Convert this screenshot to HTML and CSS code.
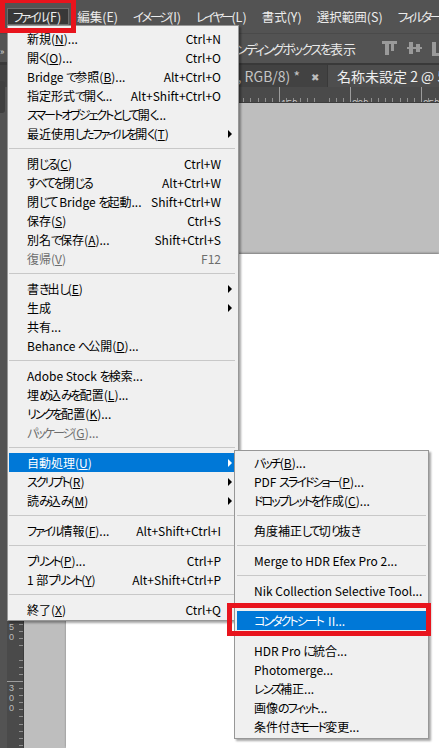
FILE: index.html
```html
<!DOCTYPE html>
<html lang="ja">
<head>
<meta charset="utf-8">
<title>Photoshop ファイルメニュー</title>
<link rel="stylesheet" href="styles.css">
</head>
<body>
<div class="app">
  <div class="menubar">
    <span class="mb-item active"><span class="k">ファイル</span>(F)</span>
    <span class="mb-item">編集(E)</span>
    <span class="mb-item"><span class="k">イメージ</span>(I)</span>
    <span class="mb-item"><span class="k">レイヤー</span>(L)</span>
    <span class="mb-item">書式(Y)</span>
    <span class="mb-item">選択範囲(S)</span>
    <span class="mb-item"><span class="k">フィルター</span>(T)</span>
  </div>
  <div class="optbar">
    <div class="opt-left"><span class="opt-check"></span><span class="opt-text"><span class="k">バウンディングボックスを</span>表示</span></div>
    <span class="opt-sep"></span>
    <svg class="opt-icon" width="15" height="15" viewBox="0 0 15 15"><rect x="0" y="0" width="15" height="3" fill="#9a9a9a"/><rect x="3" y="3" width="4" height="11" fill="#9a9a9a"/><rect x="9" y="3" width="3" height="7" fill="#9a9a9a"/></svg>
    <svg class="opt-icon" width="15" height="15" viewBox="0 0 15 15"><rect x="0" y="6" width="15" height="2" fill="#9a9a9a"/><rect x="2" y="1" width="4" height="12" fill="#9a9a9a"/><rect x="9" y="3" width="4" height="8" fill="#9a9a9a"/></svg>
    <svg class="opt-icon" width="15" height="15" viewBox="0 0 15 15"><rect x="0" y="12" width="15" height="3" fill="#9a9a9a"/><rect x="0" y="1" width="4" height="11" fill="#9a9a9a"/><rect x="7" y="5" width="3" height="7" fill="#9a9a9a"/></svg>
  </div>
  <div class="tabs">
    <div class="tab inactive"><span class="tab-text">名称未設定 1 @ 66.7% (<span class="k">レイヤー</span> 3, RGB/8) *</span><span class="tab-x">✖</span></div>
    <div class="tab active"><span class="tab-text">名称未設定 2 @ 50% (RGB/8) *</span></div>
  </div>
  <div class="work">
    <div class="toolstrip">
      <span class="ts-arrow">»</span>
      <span class="ts-line"></span>
      <span class="ts-btn"></span>
    </div>
    <div class="vruler">
      <div class="vseg"><span class="vlab">-<br>1<br>0<br>0</span></div>
      <div class="vseg"><span class="vlab">-<br>5<br>0</span></div>
      <div class="vseg"><span class="vlab">0</span></div>
      <div class="vseg"><span class="vlab">5<br>0</span></div>
      <div class="vseg"><span class="vlab">1<br>0<br>0</span></div>
      <div class="vseg"><span class="vlab">1<br>5<br>0</span></div>
      <div class="vseg"><span class="vlab">2<br>0<br>0</span></div>
      <div class="vseg"><span class="vlab">2<br>5<br>0</span></div>
      <div class="vseg"><span class="vlab">3<br>0<br>0</span></div>
    </div>
    <div class="docwrap">
      <div class="hruler">
        <div class="hseg"><span class="hlab">0</span></div>
        <div class="hseg"><span class="hlab">50</span></div>
        <div class="hseg"><span class="hlab">100</span></div>
        <div class="hseg"><span class="hlab">150</span></div>
        <div class="hseg"><span class="hlab">200</span></div>
        <div class="hseg"><span class="hlab">250</span></div>
      </div>
      <div class="pasteboard"><div class="doc"></div></div>
    </div>
  </div>
</div>

<div class="menu file-menu">
  <div class="mi"><span class="lb">新規(<u>N</u>)...</span><span class="sc">Ctrl+N</span><span class="ar"></span></div>
  <div class="mi"><span class="lb">開<span class="k">く</span>(<u>O</u>)...</span><span class="sc">Ctrl+O</span><span class="ar"></span></div>
  <div class="mi"><span class="lb">Bridge <span class="k">で</span>参照(<u>B</u>)...</span><span class="sc">Alt+Ctrl+O</span><span class="ar"></span></div>
  <div class="mi"><span class="lb">指定形式<span class="k">で</span>開<span class="k">く</span>...</span><span class="sc">Alt+Shift+Ctrl+O</span><span class="ar"></span></div>
  <div class="mi"><span class="lb"><span class="k">スマートオブジェクトとして</span>開<span class="k">く</span>...</span><span class="sc"></span><span class="ar"></span></div>
  <div class="mi"><span class="lb">最近使用<span class="k">したファイルを</span>開<span class="k">く</span>(<u>T</u>)</span><span class="sc"></span><span class="ar on"></span></div>
  <div class="sep"></div>
  <div class="mi"><span class="lb">閉<span class="k">じる</span>(<u>C</u>)</span><span class="sc">Ctrl+W</span><span class="ar"></span></div>
  <div class="mi"><span class="lb"><span class="k">すべてを</span>閉<span class="k">じる</span></span><span class="sc">Alt+Ctrl+W</span><span class="ar"></span></div>
  <div class="mi"><span class="lb">閉<span class="k">じて</span> Bridge <span class="k">を</span>起動...</span><span class="sc">Shift+Ctrl+W</span><span class="ar"></span></div>
  <div class="mi"><span class="lb">保存(<u>S</u>)</span><span class="sc">Ctrl+S</span><span class="ar"></span></div>
  <div class="mi"><span class="lb">別名<span class="k">で</span>保存(<u>A</u>)...</span><span class="sc">Shift+Ctrl+S</span><span class="ar"></span></div>
  <div class="mi dis"><span class="lb">復帰(<u>V</u>)</span><span class="sc">F12</span><span class="ar"></span></div>
  <div class="sep"></div>
  <div class="mi"><span class="lb">書<span class="k">き</span>出<span class="k">し</span>(<u>E</u>)</span><span class="sc"></span><span class="ar on"></span></div>
  <div class="mi"><span class="lb">生成</span><span class="sc"></span><span class="ar on"></span></div>
  <div class="mi"><span class="lb">共有...</span><span class="sc"></span><span class="ar"></span></div>
  <div class="mi"><span class="lb">Behance <span class="k">へ</span>公開(<u>D</u>)...</span><span class="sc"></span><span class="ar"></span></div>
  <div class="sep"></div>
  <div class="mi"><span class="lb">Adobe Stock <span class="k">を</span>検索...</span><span class="sc"></span><span class="ar"></span></div>
  <div class="mi"><span class="lb">埋<span class="k">め</span>込<span class="k">みを</span>配置(<u>L</u>)...</span><span class="sc"></span><span class="ar"></span></div>
  <div class="mi"><span class="lb"><span class="k">リンクを</span>配置(<u>K</u>)...</span><span class="sc"></span><span class="ar"></span></div>
  <div class="mi dis"><span class="lb"><span class="k">パッケージ</span>(<u>G</u>)...</span><span class="sc"></span><span class="ar"></span></div>
  <div class="sep"></div>
  <div class="mi hl"><span class="lb">自動処理(<u>U</u>)</span><span class="sc"></span><span class="ar on"></span></div>
  <div class="mi"><span class="lb"><span class="k">スクリプト</span>(<u>R</u>)</span><span class="sc"></span><span class="ar on"></span></div>
  <div class="mi"><span class="lb">読<span class="k">み</span>込<span class="k">み</span>(<u>M</u>)</span><span class="sc"></span><span class="ar on"></span></div>
  <div class="sep"></div>
  <div class="mi"><span class="lb"><span class="k">ファイル</span>情報(<u>F</u>)...</span><span class="sc">Alt+Shift+Ctrl+I</span><span class="ar"></span></div>
  <div class="sep"></div>
  <div class="mi"><span class="lb"><span class="k">プリント</span>(<u>P</u>)...</span><span class="sc">Ctrl+P</span><span class="ar"></span></div>
  <div class="mi"><span class="lb">1 部<span class="k">プリント</span>(<u>Y</u>)</span><span class="sc">Alt+Shift+Ctrl+P</span><span class="ar"></span></div>
  <div class="sep"></div>
  <div class="mi"><span class="lb">終了(<u>X</u>)</span><span class="sc">Ctrl+Q</span><span class="ar"></span></div>
</div>

<div class="menu sub-menu">
  <div class="mi"><span class="lb"><span class="k">バッチ</span>(<u>B</u>)...</span></div>
  <div class="mi"><span class="lb">PDF <span class="k">スライドショー</span>(<u>P</u>)...</span></div>
  <div class="mi"><span class="lb"><span class="k">ドロップレットを</span>作成(<u>C</u>)...</span></div>
  <div class="sep"></div>
  <div class="mi"><span class="lb">角度補正<span class="k">して</span>切<span class="k">り</span>抜<span class="k">き</span></span></div>
  <div class="sep"></div>
  <div class="mi"><span class="lb">Merge to HDR Efex Pro 2...</span></div>
  <div class="sep"></div>
  <div class="mi"><span class="lb">Nik Collection Selective Tool...</span></div>
  <div class="sep"></div>
  <div class="mi hl"><span class="lb"><span class="k">コンタクトシート</span>&nbsp;&nbsp;II...</span></div>
  <div class="sep"></div>
  <div class="mi"><span class="lb">HDR Pro <span class="k">に</span>統合...</span></div>
  <div class="mi"><span class="lb">Photomerge...</span></div>
  <div class="mi"><span class="lb"><span class="k">レンズ</span>補正...</span></div>
  <div class="mi"><span class="lb">画像<span class="k">のフィット</span>...</span></div>
  <div class="mi"><span class="lb">条件付<span class="k">きモード</span>変更...</span></div>
</div>

<div class="redbox rb-menu"></div>
<div class="redbox rb-sub"></div>
</body>
</html>
```
FILE: styles.css
```css
* { box-sizing: border-box; }

body {
  margin: 0;
  width: 439px;
  height: 748px;
  overflow: hidden;
  position: relative;
  background: #535353;
  font-family: "Noto Sans CJK JP", "Noto Sans", sans-serif;
  font-feature-settings: "palt";
}

.app {
  display: flex;
  flex-direction: column;
  height: 748px;
}

/* ---------- menu bar ---------- */
.menubar {
  height: 33px;
  flex: none;
  background: #535353;
  display: flex;
  align-items: flex-start;
  padding: 8px 0 0 7px;
  white-space: nowrap;
  overflow: hidden;
}
.mb-item {
  height: 17px;
  line-height: 17px;
  padding: 0 7px;
  margin-right: 1px;
  font-size: 12.5px;
  color: #ececec;
  flex: none;
}
.mb-item .k { letter-spacing: -2.6px; }
.mb-item.active {
  background: #383838;
  border: 1px solid #6b6b6b;
  line-height: 15px;
  padding: 0 7px 0 5px;
}

/* ---------- options bar ---------- */
.optbar {
  height: 30px;
  flex: none;
  background: #535353;
  border-top: 1px solid #4a4a4a;
  display: flex;
  align-items: center;
  white-space: nowrap;
  overflow: hidden;
}
.opt-left {
  width: 356px;
  flex: none;
  display: flex;
  justify-content: flex-end;
  align-items: center;
  gap: 6px;
}
.opt-check {
  width: 12px;
  height: 12px;
  border: 1px solid #9a9a9a;
  background: #e0e0e0;
}
.opt-text {
  font-size: 13px;
  color: #e8e8e8;
}
.opt-text .k { letter-spacing: -2px; }
.opt-sep {
  width: 1px;
  height: 22px;
  background: #3a3a3a;
  margin: 0 14px 0 12px;
}
.opt-icon {
  flex: none;
  margin-right: 10px;
}

/* ---------- tabs ---------- */
.tabs {
  height: 24px;
  flex: none;
  display: flex;
  border-top: 2px solid #393939;
  background: #424242;
  white-space: nowrap;
  overflow: hidden;
}
.tab {
  display: flex;
  align-items: center;
  font-size: 14px;
  overflow: hidden;
}
.tab.inactive {
  width: 328px;
  flex: none;
  justify-content: flex-end;
  color: #c4c4c4;
  background: #424242;
  padding-right: 8px;
  border-right: 1px solid #393939;
}
.tab-x {
  font-size: 10px;
  color: #bdbdbd;
  margin-left: 11px;
}
.tab.active {
  flex: 1;
  background: #4e4e4e;
  color: #f0f0f0;
  padding-left: 9px;
}

/* ---------- work area ---------- */
.work {
  flex: 1;
  display: flex;
  min-height: 0;
}
.toolstrip {
  width: 7px;
  flex: none;
  background: #535353;
  display: flex;
  flex-direction: column;
  align-items: flex-start;
}
.ts-arrow { font-size: 9px; color: #ddd; line-height: 10px; margin-top: -40px; }
.ts-line { width: 7px; height: 1px; background: #3a3a3a; margin-top: 5px; }
.ts-btn { width: 5px; height: 32px; background: #3e3e3e; border-radius: 0 3px 3px 0; margin-top: 18px; }

.vruler {
  width: 17px;
  flex: none;
  background: #4a4a4a;
  padding-top: 26px;
  display: flex;
  flex-direction: column;
  border-right: 1px solid #3c3c3c;
  overflow: hidden;
}
.vseg {
  height: 71px;
  flex: none;
  border-top: 1px solid #9c9c9c;
  background-image: repeating-linear-gradient(to bottom, transparent 0 6px, #8f8f8f 6px 7px, transparent 7px 7.1px);
  background-size: 4px 100%;
  background-position: right top;
  background-repeat: no-repeat;
  padding: 1px 0 0 2px;
}
.vlab {
  display: block;
  font-family: "Liberation Sans", sans-serif;
  font-size: 9px;
  line-height: 10px;
  color: #bdbdbd;
}

.docwrap {
  flex: 1;
  display: flex;
  flex-direction: column;
  min-width: 0;
}
.hruler {
  height: 16px;
  flex: none;
  background: #4a4a4a;
  display: flex;
  padding-left: 42px;
  overflow: hidden;
  border-bottom: 1px solid #3c3c3c;
}
.hseg {
  width: 71px;
  flex: none;
  border-left: 1px solid #9c9c9c;
  background-image: repeating-linear-gradient(to right, transparent 0 6px, #8f8f8f 6px 7px, transparent 7px 7.1px);
  background-size: 100% 4px;
  background-position: left bottom;
  background-repeat: no-repeat;
  padding: 2px 0 0 1px;
}
.hlab {
  font-family: "Liberation Sans", sans-serif;
  font-size: 10px;
  line-height: 10px;
  color: #c4c4c4;
}
.pasteboard {
  flex: 1;
  background: #bebebe;
  padding: 151px 0 0 42px;
}
.doc {
  height: 100%;
  background: #ffffff;
  box-shadow: 0 -1px 2px rgba(0, 0, 0, 0.35);
}

/* ---------- dropdown menus ---------- */
.menu {
  position: absolute;
  background: #f0f0f0;
  border: 1px solid #979797;
  box-shadow: 2px 2px 2px rgba(0, 0, 0, 0.35);
  font-size: 12px;
  color: #000;
  white-space: nowrap;
}
.menu .k { letter-spacing: -2px; }
.file-menu {
  left: 7px;
  top: 25px;
  width: 232px;
  padding: 3px 3px 1px 1px;
}
.sub-menu {
  left: 234px;
  top: 450px;
  width: 195px;
  padding: 2px;
}
.mi {
  height: 19px;
  display: grid;
  grid-template-columns: 1fr auto 11px;
  align-items: center;
  padding: 0 3px 0 18px;
}
.sub-menu .mi {
  grid-template-columns: 1fr;
  padding-left: 17px;
}
.mi u {
  text-decoration: underline;
  text-underline-offset: 1px;
}
.mi .sc {
  text-align: right;
}
.mi .ar.on {
  justify-self: start;
  margin-left: 7px;
  width: 0;
  height: 0;
  border-left: 4px solid #000;
  border-top: 4px solid transparent;
  border-bottom: 4px solid transparent;
}
.mi.dis { color: #6d6d6d; }
.mi.hl { background: #0078d7; color: #ffffff; }
.mi.hl .ar.on { border-left-color: #ffffff; }
.sep {
  height: 1px;
  margin: 5px 0;
  background: #c8c8c8;
}

/* ---------- annotation boxes ---------- */
.redbox {
  position: absolute;
  border: 5px solid #e8141d;
}
.rb-menu {
  left: 0;
  top: -2px;
  width: 76px;
  height: 35px;
}
.rb-sub {
  left: 227px;
  top: 603px;
  width: 204px;
  height: 33px;
}
```
